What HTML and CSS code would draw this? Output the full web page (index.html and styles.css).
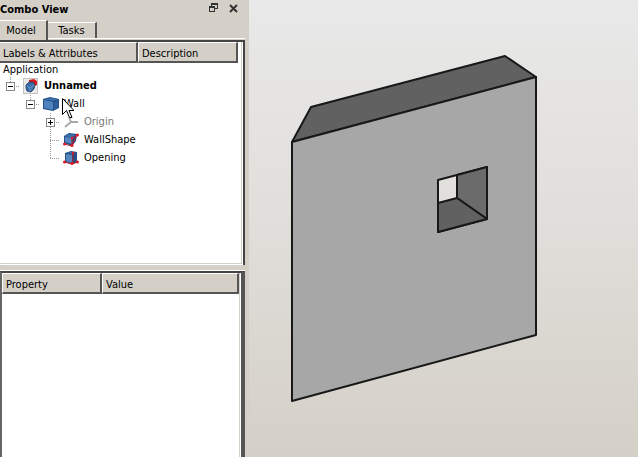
FILE: index.html
```html
<!DOCTYPE html>
<html lang="en">
<head>
    <meta charset="UTF-8">
    <meta name="viewport" content="width=device-width, initial-scale=1.0">
    <title>Combo View</title>
    <link rel="stylesheet" href="styles.css">
</head>
<body>
    <aside class="panel">
        <header class="titlebar">
            <h1>Combo View</h1>
            <button class="dock" aria-label="Float">
                <svg width="9" height="10" viewBox="0 0 9 10" fill="none" stroke="#333" shape-rendering="crispEdges">
                    <path d="M2.500 3V.5h6v5H6M2 1.500h7M.5 3.500h5v5h-5zM0 4.500h6"/>
                </svg>
            </button>
            <button class="dock" aria-label="Close">
                <svg width="9" height="9" viewBox="0 0 9 9" stroke="#333" stroke-width="2">
                    <path d="M1 1l7 7M8 1L1 8"/>
                </svg>
            </button>
        </header>

        <div class="tabs" role="tablist">
            <button class="tab active" role="tab" aria-selected="true">Model</button>
            <button class="tab" role="tab" aria-selected="false">Tasks</button>
        </div>

        <section class="frame tree">
            <div class="columns">
                <span class="labels">Labels &amp; Attributes</span>
                <span>Description</span>
            </div>
            <div class="root">Application</div>
            <ul>
                <li class="level1">
                    <span class="guide"><button class="toggle" aria-label="Collapse"></button></span>
                    <svg class="icon" viewBox="0 0 16 16">
                        <rect x=".5" y=".5" width="14" height="15" fill="#eceae8" stroke="#c4c4c4"/>
                        <path d="M6 2l5-1 3 2v4l-3 1-5-3z" fill="#d8191b"/>
                        <path d="M3 7l3-3 4 0 2 3-1 4-3 3-4-1-1-3z" fill="#3b6da8" stroke="#183c67" stroke-width=".8"/>
                        <path d="M4 8l3 2 4-3M7 10v3" fill="none" stroke="#7ba6d2" stroke-width=".8"/>
                    </svg>
                    <b>Unnamed</b>
                </li>
                <li class="level2">
                    <span class="guide"><button class="toggle" aria-label="Collapse"></button></span>
                    <svg class="icon" viewBox="0 0 16 16">
                        <path d="M0 3l7-2 9 2v9l-6 3-10-2z" fill="#244f87"/>
                        <path d="M1 3l6-1 8 1-5 2z" fill="#3a6fac"/>
                        <path d="M1 4l9 2v8l-9-2z" fill="#4f83bd"/>
                        <path d="M11 6l4-2v8l-4 2z" fill="#2f5d99"/>
                    </svg>
                    <span>Wall</span>
                    <svg class="cursor" width="12" height="21" viewBox="0 0 12 21">
                        <path d="M.5.5v16l4-4 3 7h2.500l-3-7h5z" fill="#fff" stroke="#000"/>
                    </svg>
                </li>
                <li class="level3 more">
                    <span class="guide"><button class="toggle closed" aria-label="Expand"></button></span>
                    <svg class="icon" viewBox="0 0 16 16" fill="none" stroke="#aaa" stroke-width="2">
                        <path d="M6 3l2 5h7M8 8l-6 5"/>
                    </svg>
                    <span class="muted">Origin</span>
                </li>
                <li class="level3 more">
                    <span class="guide"></span>
                    <svg class="icon" viewBox="0 0 16 16">
                        <path d="M1 4l5-3 8 1-1 7-4 5-8-3z" fill="#244f87"/>
                        <path d="M2 4l4-2 7 1-4 3z" fill="#3a6fac"/>
                        <path d="M2 5l7 1v6l-7-2z" fill="#5586bd"/>
                        <path d="M1 12l8 2 5-11M9 13V6l5-3" fill="none" stroke="#b0192a"/>
                        <g fill="#e11822">
                            <circle cx="1.500" cy="12" r="1.500"/>
                            <circle cx="9" cy="13.500" r="1.500"/>
                            <circle cx="9" cy="6" r="1.200"/>
                            <circle cx="14.500" cy="3" r="1.500"/>
                        </g>
                    </svg>
                    <span>WallShape</span>
                </li>
                <li class="level3">
                    <span class="guide"></span>
                    <svg class="icon" viewBox="0 0 16 16">
                        <path d="M2 3l6-2 6 1v10l-4 2-8-2z" fill="#244f87"/>
                        <path d="M3 3l5-1 5 1-3 1z" fill="#3a6fac"/>
                        <path d="M3 4l6 1v8l-6-2z" fill="#5586bd"/>
                        <path d="M1 12l8 2 6-2M10 14V2" fill="none" stroke="#b0192a"/>
                        <g fill="#e11822">
                            <circle cx="1.500" cy="12" r="1.500"/>
                            <circle cx="9" cy="13.500" r="1.500"/>
                            <circle cx="10" cy="3" r="1.200"/>
                            <circle cx="14.500" cy="12" r="1.500"/>
                        </g>
                    </svg>
                    <span>Opening</span>
                </li>
            </ul>
        </section>

        <section class="frame properties">
            <table>
                <thead>
                    <tr><th class="name">Property</th><th>Value</th></tr>
                </thead>
            </table>
        </section>
    </aside>

    <main class="view">
        <svg viewBox="249 0 389 457" role="img" aria-label="Wall with an opening">
            <g stroke="#181818" stroke-width="2" stroke-linejoin="round" stroke-linecap="round">
                <path fill="#616161" d="M292 142l19-35 194-51 31 21z"/>
                <path fill="#a7a7a7" fill-rule="evenodd" d="M292 142L536 77V335L292 401zM438 180v52l49-13v-52z"/>
                <path fill="#6b6b6b" d="M457 175v23l30 21v-52z"/>
                <path fill="#616161" d="M438 203l19-5 30 21-49 13z"/>
            </g>
        </svg>
    </main>
</body>
</html>
```

FILE: styles.css
```css
* {
    box-sizing: border-box;
}

body {
    margin: 0;
    height: 100vh;
    display: flex;
    overflow: hidden;
    background-color: #d4d0c8;
    color: #000;
    font-family: "DejaVu Sans Condensed", Tahoma, sans-serif;
    font-size: 11px;
    line-height: 14px;
}

button {
    padding: 0;
    border: none;
    background: none;
    color: inherit;
    font: inherit;
}

.panel {
    width: 249px;
    flex: none;
    display: flex;
    flex-direction: column;
    padding-right: 4px;
}

.titlebar {
    height: 20px;
    flex: none;
    display: flex;
    align-items: center;
    gap: 11px;
    padding: 0 7px 4px 0;
}

.titlebar h1 {
    flex: 1;
    margin: 0;
    padding-top: 4px;
    font-size: 11px;
}

.dock {
    display: flex;
}

.tabs {
    height: 20px;
    flex: none;
    display: flex;
    align-items: flex-end;
    background: linear-gradient(#fff, #fff) 0 18px / 100% 1px no-repeat;
}

.tab {
    width: 49px;
    height: 16px;
    margin-bottom: 2px;
    border-top: 1px solid #fff;
    border-right: 2px solid #555;
}

.tab.active {
    width: 48px;
    height: 20px;
    margin-bottom: 0;
    padding-right: 4px;
    background-color: #d4d0c8;
}

.frame {
    border-top: 2px solid #444;
    border-right: 2px solid #444;
    background-color: #fff;
}

.tree {
    height: 225px;
    flex: none;
    box-shadow: inset -1px -1px #fff, inset -2px -2px #d4d0c8;
}

.columns {
    width: 238px;
    height: 21px;
    display: flex;
}

.columns span,
th {
    flex: 1;
    padding: 4px 3px 0;
    border: 1px solid #fff;
    border-right: 2px solid #555;
    border-bottom: 2px solid #555;
    background-color: #d4d0c8;
    font-weight: normal;
    line-height: 14px;
    text-align: left;
}

.columns .labels {
    flex: none;
    width: 138px;
    border-left: none;
}

.root {
    height: 14px;
    padding-left: 3px;
}

ul {
    margin: 0;
    padding: 0;
    list-style: none;
}

li {
    position: relative;
    height: 18px;
    display: flex;
    align-items: center;
}

.level2 {
    padding-left: 20px;
}

.level3 {
    padding-left: 40px;
}

/* dotted branch lines */
.guide {
    width: 20px;
    height: 18px;
    flex: none;
    display: flex;
    align-items: center;
    padding-left: 6px;
    background:
        repeating-linear-gradient(#999 0 1px, transparent 1px 2px) 10px 0 / 1px 9px no-repeat,
        repeating-linear-gradient(90deg, #999 0 1px, transparent 1px 2px) 10px 9px / 10px 1px no-repeat;
}

.more .guide {
    background-size: 1px 18px, 10px 1px;
}

.toggle {
    width: 9px;
    height: 9px;
    border: 1px solid #888;
    background: linear-gradient(#000, #000) center / 5px 1px no-repeat, #fff;
}

.toggle.closed {
    background:
        linear-gradient(#000, #000) center / 5px 1px no-repeat,
        linear-gradient(#000, #000) center / 1px 5px no-repeat,
        #fff;
}

.icon {
    width: 16px;
    height: 16px;
    flex: none;
    margin: 0 5px 0 3px;
}

.muted {
    color: #777;
}

.cursor {
    position: absolute;
    left: 62px;
    top: 3px;
    z-index: 1;
}

.properties {
    flex: 1;
    margin-top: 6px;
    padding-right: 2px;
    border-top: 2px solid #444;
    border-left: 2px solid #666;
    border-right: 4px solid #555;
    box-shadow: 0 -1px #fff, inset -1px 0 #fff, inset -2px 0 #d4d0c8;
}

table {
    width: 100%;
    border-collapse: separate;
    border-spacing: 0;
}

th {
    height: 21px;
}

.name {
    width: 100px;
}

.view {
    flex: 1;
    min-width: 0;
    background: linear-gradient(#e9e9e9, #e0deda 50%, #d4d0c7);
}

.view svg {
    display: block;
    width: 100%;
    height: 100%;
}
```
